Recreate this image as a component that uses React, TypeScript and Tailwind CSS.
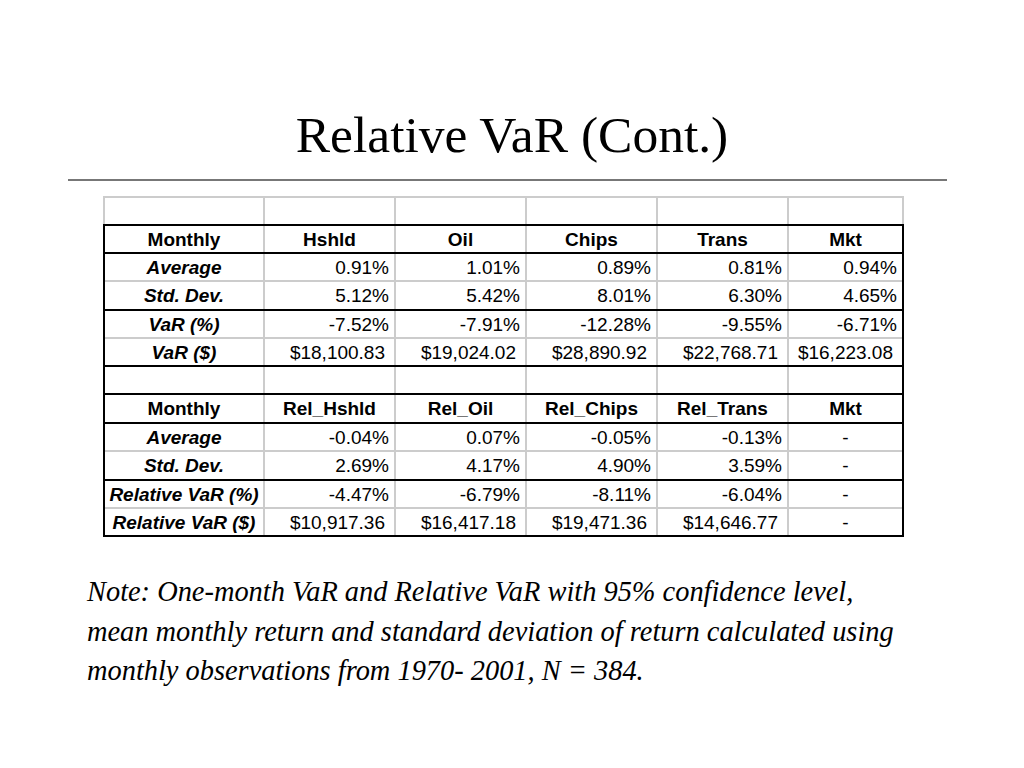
import React from "react";

type Row = {
  label: string;
  values: string[];
  kind: "head" | "data" | "blank";
  h: string;
  line: "black" | "gray" | "none";
};

const widths = ["w-[160px]", "w-[131px]", "w-[131px]", "w-[131px]", "w-[131px]", "flex-1"];

const rows: Row[] = [
  { label: "Monthly", values: ["Hshld", "Oil", "Chips", "Trans", "Mkt"], kind: "head", h: "h-[28px]", line: "black" },
  { label: "Average", values: ["0.91%", "1.01%", "0.89%", "0.81%", "0.94%"], kind: "data", h: "h-[28px]", line: "gray" },
  { label: "Std. Dev.", values: ["5.12%", "5.42%", "8.01%", "6.30%", "4.65%"], kind: "data", h: "h-[29px]", line: "black" },
  { label: "VaR (%)", values: ["-7.52%", "-7.91%", "-12.28%", "-9.55%", "-6.71%"], kind: "data", h: "h-[28px]", line: "gray" },
  { label: "VaR ($)", values: ["$18,100.83", "$19,024.02", "$28,890.92", "$22,768.71", "$16,223.08"], kind: "data", h: "h-[28px]", line: "black" },
  { label: "", values: ["", "", "", "", ""], kind: "blank", h: "h-[28px]", line: "black" },
  { label: "Monthly", values: ["Rel_Hshld", "Rel_Oil", "Rel_Chips", "Rel_Trans", "Mkt"], kind: "head", h: "h-[29px]", line: "black" },
  { label: "Average", values: ["-0.04%", "0.07%", "-0.05%", "-0.13%", "-"], kind: "data", h: "h-[28px]", line: "gray" },
  { label: "Std. Dev.", values: ["2.69%", "4.17%", "4.90%", "3.59%", "-"], kind: "data", h: "h-[29px]", line: "black" },
  { label: "Relative VaR (%)", values: ["-4.47%", "-6.79%", "-8.11%", "-6.04%", "-"], kind: "data", h: "h-[28px]", line: "gray" },
  { label: "Relative VaR ($)", values: ["$10,917.36", "$16,417.18", "$19,471.36", "$14,646.77", "-"], kind: "data", h: "h-[26px]", line: "none" },
];

function Cell({ i, text, kind }: { i: number; text: string; kind: Row["kind"] }) {
  const last = i === 5;
  let align = "justify-center";
  let extra = "";
  if (kind === "head") extra = "font-bold";
  if (kind === "data" && i === 0) extra = "font-bold italic";
  if (kind === "data" && i > 0 && text !== "-") {
    align = "justify-end";
    extra = text.startsWith("$") ? "pr-[9px]" : "pr-[5px]";
  }
  return (
    <div
      className={`${widths[i]} h-full pt-[2px] flex items-center ${align} ${extra} ${
        last ? "" : "border-r-2 border-[#cccccc]"
      }`}
    >
      {text}
    </div>
  );
}

export default function App() {
  return (
    <div className="w-[1024px] h-[768px] bg-white text-black overflow-hidden">
      <h1 className="pt-[109px] text-center text-[51.5px] leading-none font-['Liberation_Serif',serif]">
        Relative VaR (Cont.)
      </h1>
      <div className="mt-[18.5px] ml-[68px] w-[879px] h-[2px] bg-[#777777]" />

      <div className="mt-[15px] ml-[103px] w-[801px] text-[19px] font-['Liberation_Sans',Arial,sans-serif]">
        <div className="flex h-[28px] border-x-2 border-t-2 border-[#cccccc]">
          {widths.map((w, i) => (
            <div key={i} className={`${w} h-full ${i === 5 ? "" : "border-r-2 border-[#cccccc]"}`} />
          ))}
        </div>
        <div className="border-2 border-black">
          {rows.map((r, ri) => (
            <div
              key={ri}
              className={`flex ${r.h} ${
                r.line === "black"
                  ? "border-b-2 border-black"
                  : r.line === "gray"
                  ? "border-b-2 border-[#cccccc]"
                  : ""
              }`}
            >
              {[r.label, ...r.values].map((t, i) => (
                <Cell key={i} i={i} text={t} kind={r.kind} />
              ))}
            </div>
          ))}
        </div>
      </div>

      <p className="mt-[35px] ml-[87px] text-[28.4px] leading-[39.5px] italic whitespace-nowrap font-['Liberation_Serif',serif]">
        Note: One-month VaR and Relative VaR with 95% confidence level,
        <br />
        mean monthly return and standard deviation of return calculated using
        <br />
        monthly observations from 1970- 2001, N = 384.
      </p>
    </div>
  );
}
